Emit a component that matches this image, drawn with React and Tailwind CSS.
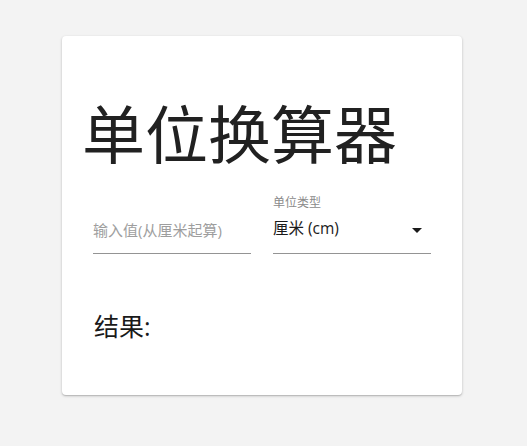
import React, { useState } from "react";

export default function App() {
  const [value, setValue] = useState("");
  const [unit] = useState("厘米 (cm)");

  return (
    <div
      className="min-h-screen bg-[#f3f3f3] pt-9"
      style={{ fontFamily: '"Open Sans", "Noto Sans CJK SC", sans-serif' }}
    >
      <div className="ml-[62px] w-[400px] h-[359px] bg-white rounded shadow-[0_1px_3px_rgba(0,0,0,0.2),0_1px_1px_rgba(0,0,0,0.12)]">
        <h1 className="pt-[62px] pl-[20px] text-[63px] leading-[72px] text-[#212121] font-normal">
          单位换算器
        </h1>

        <div className="flex items-end gap-[22px] pl-[31px] mt-[25px]">
          <div className="w-[158px] h-[43px] pt-[7px] border-b border-[#949494]">
            <input
              value={value}
              onChange={(e) => setValue(e.target.value)}
              placeholder="输入值(从厘米起算)"
              className="w-full h-[20px] leading-[20px] text-[15px] text-[#212121] placeholder:text-[#9e9e9e] outline-none bg-transparent"
            />
          </div>
          <div className="w-[158px] flex flex-col">
            <span className="text-[12px] leading-[16px] text-[#8a8a8a]">单位类型</span>
            <div className="h-[43px] pt-[7px] flex items-start justify-between border-b border-[#949494]">
              <span className="text-[15.5px] leading-[20px] text-[#1a1a1a]">{unit}</span>
              <svg width="24" height="24" viewBox="0 0 24 24" className="mr-[2px]">
                <path d="M7 10l5 5 5-5z" fill="#1a1a1a" />
              </svg>
            </div>
          </div>
        </div>

        <div className="pl-[32px] mt-[56px] text-[25px] leading-[32px] text-[#1a1a1a]">结果:</div>
      </div>
    </div>
  );
}
